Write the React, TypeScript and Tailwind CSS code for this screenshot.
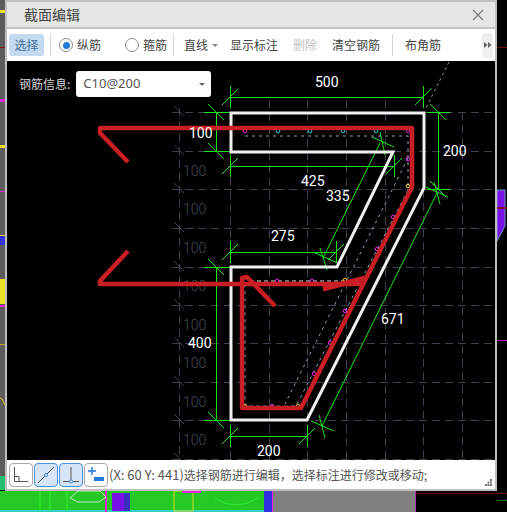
const ui = { fontFamily: '"Noto Sans CJK SC", "Noto Sans", sans-serif' };

const gridX = [230, 269, 307, 346, 385, 423, 462];
const gridY = [112, 151, 189, 228, 267, 305, 343, 382, 420, 459];
const grayLabels = [171, 209, 248, 286, 325, 363, 402, 440];

const cyanDots = [278, 310, 343, 376];
const magentaDots = [
  [245, 131], [408, 131], [408, 159], [393, 217], [377, 249], [345, 311],
  [330, 343], [314, 374], [272, 406], [277, 281], [312, 281],
];
const yellowDots = [[408, 186], [298, 406], [245, 406], [345, 280]];

// green dimension tick: short upright line with a slash through it
function Tick({ x, y, h = true }: { x: number; y: number; h?: boolean }) {
  return (
    <g stroke="#19e619" strokeWidth="1" shapeRendering="crispEdges">
      {h ? <line x1={x} y1={y - 11} x2={x} y2={y + 11} /> : <line x1={x - 11} y1={y} x2={x + 11} y2={y} />}
      <line x1={x - 8} y1={h ? y + 8 : y - 8} x2={x + 8} y2={h ? y - 8 : y + 8} />
    </g>
  );
}

function Num({ x, y, children, gray }: { x: number; y: number; children: string; gray?: boolean }) {
  return (
    <text
      x={x}
      y={y}
      fontSize="14"
      fontWeight={gray ? "300" : "400"}
      fontFamily='Roboto, "Liberation Sans", sans-serif'
      fill={gray ? "#434a5a" : "#ffffff"}
    >
      {children}
    </text>
  );
}

function Drawing() {
  return (
    <svg viewBox="7 61 488 399" className="block w-full h-full">
      {/* grid */}
      <g stroke="#3b4150" strokeWidth="1" strokeDasharray="8 5" shapeRendering="crispEdges">
        {gridX.map((x) => <line key={x} x1={x} y1={gridX.indexOf(x) > 4 ? 112 : 100} x2={x} y2={460} />)}
        <line x1={179} y1={108} x2={179} y2={460} />
        {gridY.map((y) => <line key={y} x1={172} y1={y} x2={494} y2={y} />)}
      </g>
      <g stroke="#3b4150" strokeWidth="1">
        {gridY.map((y) => <line key={y} x1={174} y1={y - 6} x2={184} y2={y + 4} />)}
      </g>
      {grayLabels.map((y) => <Num key={y} x={183} y={y + 5} gray>100</Num>)}
      <line x1={449} y1={62} x2={425} y2={110} stroke="#8a8a8a" strokeDasharray="3 3" />

      {/* green dimensions */}
      <g stroke="#19e619" strokeWidth="1" shapeRendering="crispEdges">
        <line x1={230} y1={97} x2={423} y2={97} />
        <line x1={204} y1={112} x2={230} y2={112} />
        <line x1={204} y1={151} x2={230} y2={151} />
        <line x1={216} y1={112} x2={216} y2={151} />
        <line x1={427} y1={112} x2={450} y2={112} />
        <line x1={427} y1={189} x2={450} y2={189} />
        <line x1={438} y1={112} x2={438} y2={189} />
        <line x1={230} y1={166} x2={394} y2={166} />
        <line x1={230} y1={252} x2={336} y2={252} />
        <line x1={204} y1={267} x2={230} y2={267} />
        <line x1={204} y1={420} x2={230} y2={420} />
        <line x1={216} y1={267} x2={216} y2={420} />
        <line x1={230} y1={436} x2={307} y2={436} />
      </g>
      <line x1={380} y1={143} x2={323} y2={258} stroke="#19e619" />
      <line x1={322} y1={426} x2={437} y2={193} stroke="#19e619" />
      <Tick x={230} y={97} /><Tick x={423} y={97} />
      <Tick x={216} y={112} h={false} /><Tick x={216} y={151} h={false} />
      <Tick x={438} y={112} h={false} /><Tick x={438} y={189} h={false} />
      <Tick x={230} y={166} /><Tick x={394} y={166} />
      <Tick x={230} y={252} /><Tick x={336} y={252} />
      <Tick x={216} y={267} h={false} /><Tick x={216} y={420} h={false} />
      <Tick x={230} y={436} /><Tick x={307} y={436} />
      <g stroke="#19e619">
        <line x1={372} y1={137} x2={394} y2={147} />
        <line x1={380} y1={132} x2={385} y2={155} />
        <line x1={315} y1={253} x2={338} y2={263} />
        <line x1={320} y1={248} x2={327} y2={270} />
        <line x1={311} y1={421} x2={334} y2={431} />
        <line x1={319} y1={415} x2={325} y2={438} />
        <line x1={426} y1={187} x2={448} y2={197} />
        <line x1={434} y1={182} x2={440} y2={204} />
      </g>

      {/* section outline */}
      <path
        d="M231 113 H424 V188 L307 420 H231 V267 H337 L393 152 H231 Z"
        fill="none"
        stroke="#f0f0f0"
        strokeWidth="3"
      />

      {/* dashed rebar guides */}
      <g fill="none" stroke="#a9c8ea" strokeWidth="1" strokeDasharray="3 4" opacity="0.8">
        <path d="M245 136 H408 V190 L296 406 H245 V282" />
        <line x1={408} y1={158} x2={285} y2={404} />
      </g>
      <line x1={250} y1={281} x2={360} y2={281} stroke="#e8e8e8" strokeDasharray="4 3" />

      {cyanDots.map((x) => <circle key={x} cx={x} cy={131} r={1.8} fill="none" stroke="#22d3ee" />)}
      {magentaDots.map(([x, y]) => <circle key={x + "-" + y} cx={x} cy={y} r={1.8} fill="none" stroke="#ee22ee" />)}
      {yellowDots.map(([x, y]) => <circle key={x + "-" + y} cx={x} cy={y} r={1.8} fill="none" stroke="#f0d020" />)}

      {/* red rebar */}
      <g fill="none" stroke="#c81e24" strokeWidth="4.5" strokeLinejoin="round">
        <path d="M128 162 L100 133 V128 H412 V187 L301 408 H242 V278 L247 277 L275 306" />
        <path d="M128 251 L100 281 V284 H362" />
        <path d="M323 289 L365 278" strokeWidth="5" />
      </g>

      <Num x={189} y={138}>100</Num>
      <Num x={315} y={87}>500</Num>
      <Num x={443} y={156}>200</Num>
      <Num x={301} y={186}>425</Num>
      <Num x={326} y={201}>335</Num>
      <Num x={271} y={241}>275</Num>
      <Num x={381} y={324}>671</Num>
      <Num x={188} y={348}>400</Num>
      <Num x={257} y={456}>200</Num>
    </svg>
  );
}

function Separator() {
  return <div className="w-px h-[22px] bg-[#d4d4d4]" />;
}

function Radio({ checked, label, className }: { checked?: boolean; label: string; className: string }) {
  return (
    <div className={"flex items-center gap-[4px] " + className}>
      <span className="flex items-center justify-center w-[14px] h-[14px] rounded-full border border-[#8f8f8f]">
        {checked && <span className="w-[7px] h-[7px] rounded-full bg-[#1f7ae0]" />}
      </span>
      <span>{label}</span>
    </div>
  );
}

function Toolbar() {
  return (
    <div className="flex items-center h-[32px] bg-white text-[12px] text-[#444444] pl-[2px] shrink-0">
      <button className="w-[35px] h-[22px] rounded-[3px] bg-[#c3daf0] text-[#44709c]">选择</button>
      <div className="ml-[6px]"><Separator /></div>
      <Radio checked label="纵筋" className="ml-[8px]" />
      <Radio label="箍筋" className="ml-[24px]" />
      <div className="ml-[6px]"><Separator /></div>
      <div className="ml-[10px] flex items-center gap-[4px]">
        直线
        <span className="w-0 h-0 border-x-[3px] border-x-transparent border-t-[3px] border-t-[#888888]" />
      </div>
      <span className="ml-[12px]">显示标注</span>
      <span className="ml-[15px] text-[#c4c4c4]">删除</span>
      <span className="ml-[15px]">清空钢筋</span>
      <div className="ml-[12px]"><Separator /></div>
      <span className="ml-[12px]">布角筋</span>
      <div className="ml-[41px] w-[11px] h-[25px] rounded-[3px] bg-[#efefef] flex items-center justify-center text-[#666666]">
        <svg width="8" height="6" viewBox="0 0 8 6"><path d="M0 0 L3.5 3 L0 6 Z M4 0 L7.5 3 L4 6 Z" fill="#666666" /></svg>
      </div>
    </div>
  );
}

function ToolButton({ active, children }: { active?: boolean; children: React.ReactNode }) {
  return (
    <div className={"w-[24px] h-[24px] rounded-[4px] border flex items-center justify-center " + (active ? "border-[#4a90e2] bg-[#d6e4f7]" : "border-[#a8a8a8] bg-white")}>
      <svg width="22" height="22" viewBox="0 0 22 22" fill="none">{children}</svg>
    </div>
  );
}

function StatusBar() {
  return (
    <div className="relative flex items-center h-[29px] bg-white pl-[2px] shrink-0">
      <div className="flex gap-px">
        <ToolButton>
          <path d="M4.5 3 V17.5 H18 M4.5 12.5 H9 V17.5" stroke="#555555" />
        </ToolButton>
        <ToolButton active>
          <path d="M3 19 L19 3" stroke="#555555" />
          <circle cx="11" cy="11" r="1.6" fill="#d6e4f7" stroke="#4a90e2" />
        </ToolButton>
        <ToolButton active>
          <path d="M11 3 V17 M3 17.5 H19" stroke="#555555" />
          <circle cx="11" cy="17.5" r="1.6" fill="#d6e4f7" stroke="#4a90e2" />
        </ToolButton>
        <ToolButton>
          <path d="M7 3 V11 M3 7 H11" stroke="#1f7ae0" strokeWidth="1.4" />
          <rect x="9" y="13" width="10" height="4" fill="#1f7ae0" />
        </ToolButton>
      </div>
      <span className="ml-px text-[12px] text-[#555555] whitespace-nowrap">
        <span className="text-[13px]">(X: 60 Y: 441)</span>选择钢筋进行编辑，选择标注进行修改或移动;
      </span>
      {/* resize grip */}
      <svg className="absolute right-[2px] bottom-[2px]" width="8" height="8" viewBox="0 0 8 8" fill="#777777">
        <rect x="5" y="0" width="2" height="2" />
        <rect x="2.5" y="2.5" width="2" height="2" />
        <rect x="5" y="2.5" width="2" height="2" />
        <rect x="0" y="5" width="2" height="2" />
        <rect x="2.5" y="5" width="2" height="2" />
        <rect x="5" y="5" width="2" height="2" />
      </svg>
    </div>
  );
}

function Desktop() {
  return (
    <svg viewBox="0 0 507 512" className="block w-full h-full">
      <rect width="507" height="512" fill="#000000" />
      <rect width="6" height="490" fill="#5c5c5c" />
      <rect y="10" width="6" height="3" fill="#e8e020" />
      <rect y="47" width="6" height="1" fill="#8a1010" />
      <rect y="99" width="6" height="3" fill="#ee22dd" />
      <rect y="145" width="6" height="3" fill="#e8e020" />
      <rect y="191" width="6" height="1" fill="#ee22dd" />
      <rect y="235" width="6" height="1" fill="#e8e020" />
      <rect y="236" width="6" height="9" fill="#3030e0" />
      <rect y="279" width="6" height="25" fill="#e8e020" />
      <rect y="305" width="6" height="2" fill="#ee22dd" />
      <rect y="344" width="6" height="1" fill="#b8b020" />
      <path d="M0 398 L2 399 L5 405" stroke="#d8d020" fill="none" />
      <rect y="476" width="6" height="14" fill="#20c070" />

      {/* right side */}
      <rect x="497" y="47" width="10" height="1" fill="#6a0c0c" />
      <path d="M497 190 H505 V226 L497 241 Z" fill="#7a10e8" stroke="#6aa0c8" />
      <rect x="497" y="207" width="10" height="2" fill="#80102a" />
      <rect x="497" y="340" width="10" height="1" fill="#c020c0" />
      <rect x="497" y="500" width="10" height="1" fill="#0a6a0a" />

      {/* bottom strip */}
      <rect y="491" width="264" height="21" fill="#25c825" />
      <rect y="510" width="264" height="2" fill="#30d0c0" />
      <rect x="105" y="491" width="2" height="21" fill="#ee22dd" />
      <rect x="112" y="493" width="12" height="18" fill="#7a10e8" />
      <path d="M124 493 H130 V511 H124 Z" fill="#3a30c0" />
      <path d="M70 498 L78 491 H100 L106 497 L99 502 H78 Z" fill="none" stroke="#c8e8c8" />
      <g stroke="#30ee30">
        <line x1={40} y1={491} x2={40} y2={511} />
        <line x1={50} y1={491} x2={50} y2={511} />
        <line x1={67} y1={491} x2={67} y2={511} />
      </g>
      <rect x="174" y="491" width="19" height="20" fill="none" stroke="#d8d820" />
      <rect x="182" y="491" width="19" height="2" fill="#ee22dd" />
      <path d="M215 498 Q235 512 258 498" stroke="#30ee30" fill="none" />
      <rect x="264" y="491" width="8" height="21" fill="#3030e0" />
      <rect x="272" y="491" width="1" height="21" fill="#ee22dd" />
      <rect x="273" y="491" width="142" height="21" fill="#808080" />
      <rect x="415" y="491" width="1" height="21" fill="#b030b0" />
      <rect x="416" y="493" width="91" height="1" fill="#5a0c0c" />
    </svg>
  );
}

export default function App() {
  return (
    <div className="relative w-[507px] h-[512px] overflow-hidden" style={ui}>
      <Desktop />
      {/* dialog window */}
      <div className="absolute left-[5px] top-0 w-[492px] h-[491px] border-2 border-[#bfbfbf] flex flex-col bg-white">
        <div className="flex items-center justify-between h-[25px] bg-[#e6e6e6] pl-[17px] pr-[11px] shrink-0">
          <span className="text-[14px] text-[#444444]">截面编辑</span>
          <svg width="12" height="12" viewBox="0 0 12 12" stroke="#777777" strokeWidth="1.2">
            <path d="M1 1 L11 11 M11 1 L1 11" />
          </svg>
        </div>
        <div className="h-[2px] bg-[#c4c4c4] shrink-0" />
        <Toolbar />
        <div className="relative flex-1 min-h-0 bg-black">
          <Drawing />
          <div className="absolute left-[12px] top-[10px] flex items-center gap-[6px]">
            <span className="text-[12px] text-[#d8d8d8]">钢筋信息:</span>
            <div className="flex items-center justify-between w-[135px] h-[26px] rounded-[3px] bg-white pl-[7px] pr-[6px]">
              <span className="text-[13px] text-[#555555]" style={{ fontFamily: '"Noto Sans", sans-serif' }}>C10@200</span>
              <span className="w-0 h-0 border-x-[3px] border-x-transparent border-t-[3px] border-t-[#666666]" />
            </div>
          </div>
        </div>
        <StatusBar />
      </div>
    </div>
  );
}
